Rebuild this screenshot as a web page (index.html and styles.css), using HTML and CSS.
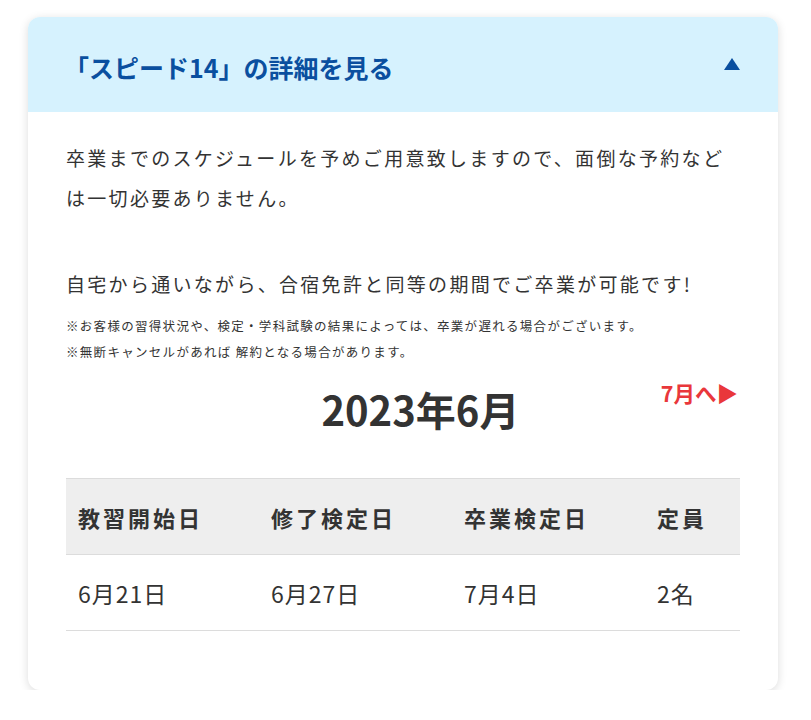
FILE: index.html
```html
<!DOCTYPE html>
<html lang="ja">
<head>
<meta charset="utf-8">
<title>スピード14</title>
<link rel="stylesheet" href="styles.css">
</head>
<body>
<div class="page">
  <section class="card">
    <div class="card-head">
      <h2 class="card-title">「スピード14」の詳細を見る</h2>
      <span class="toggle"></span>
    </div>
    <div class="card-body">
      <p class="lead">卒業までのスケジュールを予めご用意致しますので、面倒な予約などは一切必要ありません。</p>
      <p class="lead second">自宅から通いながら、合宿免許と同等の期間でご卒業が可能です!</p>
      <p class="note">※お客様の習得状況や、検定・学科試験の結果によっては、卒業が遅れる場合がございます。</p>
      <p class="note">※無断キャンセルがあれば 解約となる場合があります。</p>
      <div class="month-nav">
        <h3 class="month-title">2023年6月</h3>
        <a class="next" href="#">7月へ▶</a>
      </div>
      <table class="schedule">
        <thead>
          <tr><th class="c1">教習開始日</th><th class="c2">修了検定日</th><th class="c3">卒業検定日</th><th class="c4">定員</th></tr>
        </thead>
        <tbody>
          <tr><td>6月21日</td><td>6月27日</td><td>7月4日</td><td>2名</td></tr>
        </tbody>
      </table>
    </div>
  </section>
</div>
</body>
</html>
```
FILE: styles.css
```css
* { box-sizing: border-box; }
html, body { margin: 0; padding: 0; background: #fff; }
body {
  font-family: "Noto Sans CJK JP", "Noto Sans", sans-serif;
  color: #333;
}
.page { padding: 17px 33px 0 28px; }
.card {
  width: 750px;
  background: #fff;
  border-radius: 12px;
  box-shadow: 0 2px 10px rgba(0, 0, 0, 0.14);
  overflow: hidden;
}
.card-head {
  height: 95px;
  background: #d6f2fe;
  display: flex;
  align-items: center;
  justify-content: space-between;
  padding: 0 38px 0 36px;
}
.card-title {
  margin: 0;
  font-size: 25px;
  font-weight: 700;
  color: #0a4f9f;
  line-height: 1;
  position: relative;
  top: 3px;
}
.toggle {
  width: 0;
  height: 0;
  border-left: 8px solid transparent;
  border-right: 8px solid transparent;
  border-bottom: 12px solid #0a4f9f;
  margin-top: -2px;
}
.card-body { padding: 26px 38px 59px; }
.lead {
  margin: 0;
  font-size: 19px;
  line-height: 40px;
  letter-spacing: 2.3px;
}
.lead.second { margin-top: 46px; }
.note {
  margin: 0;
  font-size: 12.5px;
  line-height: 26px;
  letter-spacing: 1.3px;
}
.lead.second + .note { margin-top: 9px; }
.month-nav {
  display: flex;
  align-items: flex-start;
  margin-top: 14px;
}
.month-title {
  flex: 1;
  margin: 0;
  padding-left: 114px;
  text-align: center;
  font-size: 40px;
  font-weight: 700;
  line-height: 60px;
  color: #333;
}
.next {
  margin-top: -1px;
  margin-right: 2px;
  font-size: 21.5px;
  font-weight: 700;
  line-height: 30px;
  color: #e9373b;
  text-decoration: none;
}
.schedule {
  width: 100%;
  margin-top: 39px;
  border-collapse: collapse;
  table-layout: fixed;
}
.schedule th, .schedule td {
  text-align: left;
  padding: 0 0 0 12px;
  height: 76px;
  font-size: 22px;
  color: #333;
}
.schedule th {
  background: #eeeeee;
  font-weight: 700;
  letter-spacing: 3px;
  border-top: 1px solid #dcdcdc;
  border-bottom: 1px solid #dcdcdc;
}
.schedule td {
  font-size: 23px;
  font-weight: 400;
  letter-spacing: 1px;
  border-bottom: 1px solid #dcdcdc;
}
.c1, .c2, .c3 { width: 193px; }
```
